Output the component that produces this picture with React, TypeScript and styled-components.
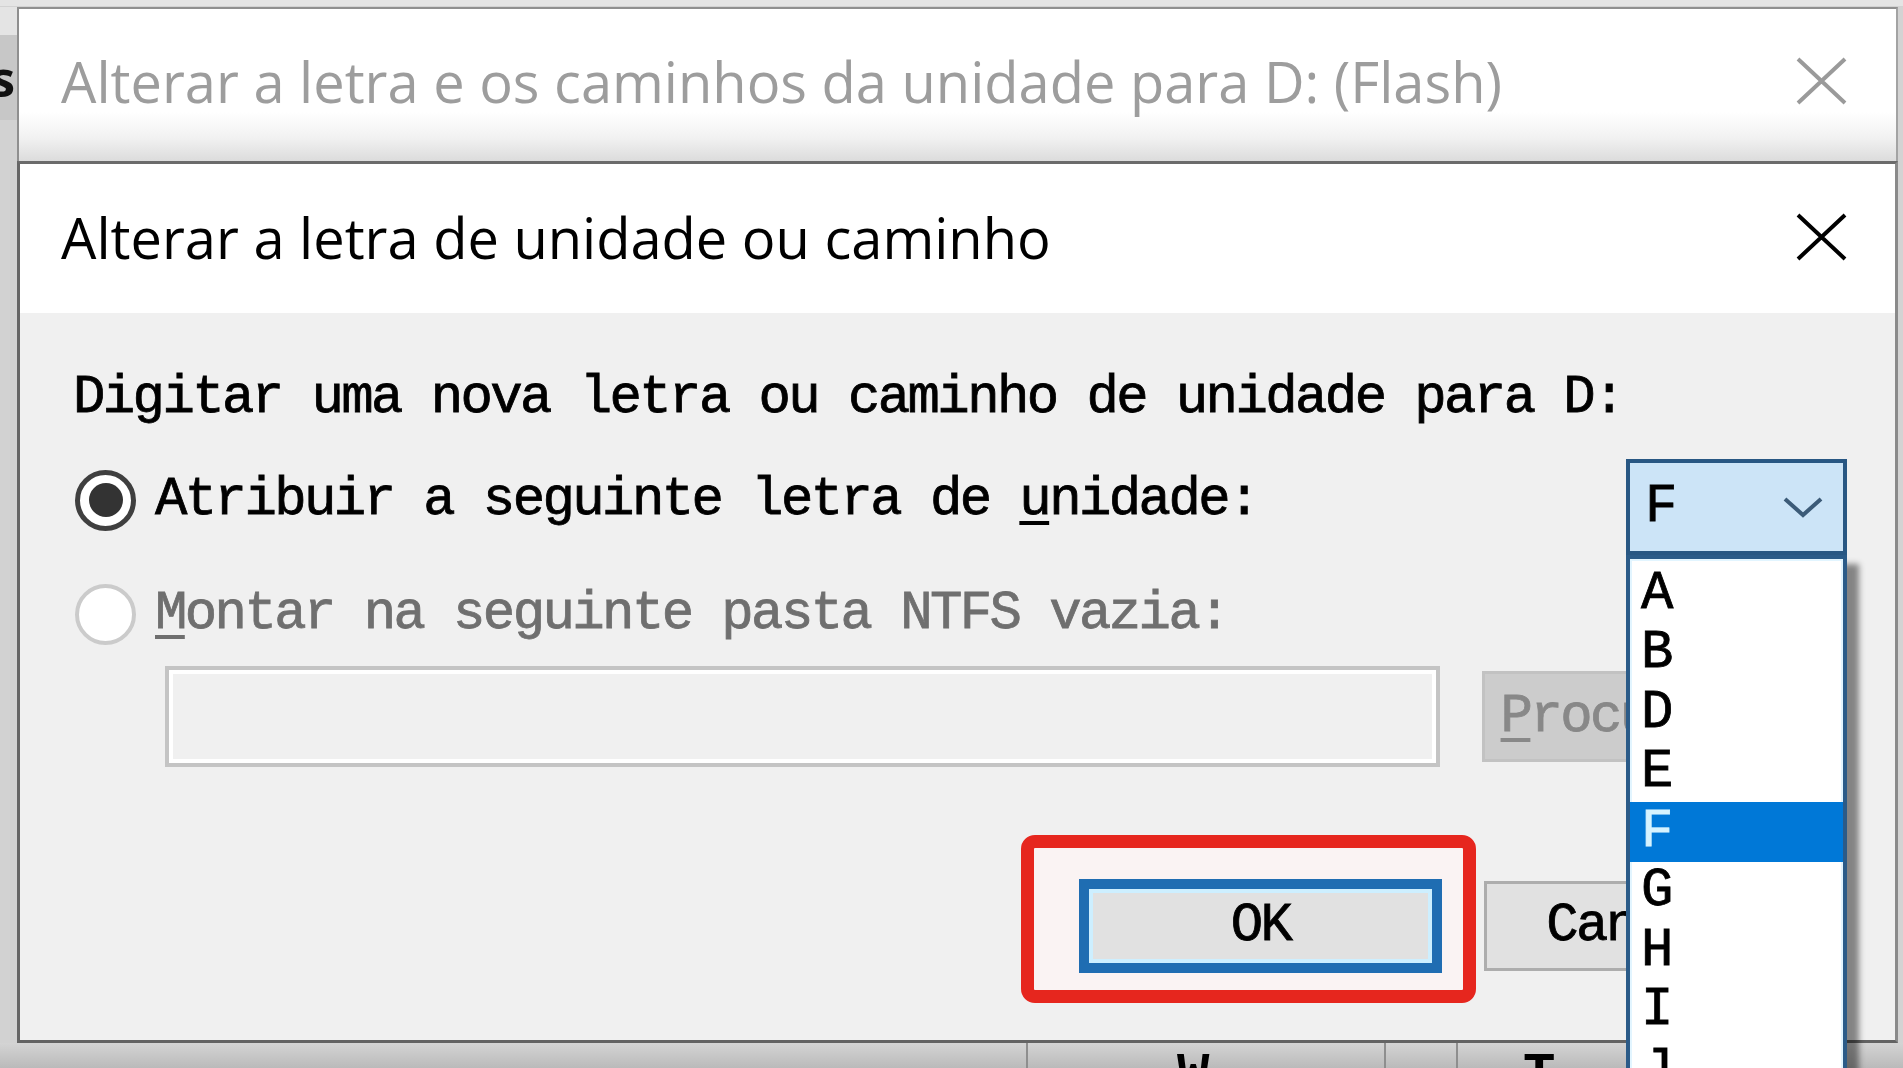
import React from "react";
import styled, { createGlobalStyle } from "styled-components";

const Global = createGlobalStyle`
  html, body { margin: 0; padding: 0; width: 1903px; height: 1068px; overflow: hidden; background: #dcdcdc; }
  #root { width: 1903px; height: 1068px; }
  * { box-sizing: border-box; }
`;

const Page = styled.div`
  width: 1903px;
  height: 1068px;
  overflow: hidden;
  display: grid;
  grid-template-rows: 7px 1036px 25px;
  background: #d9d9d9;
  font-family: "Liberation Mono", "DejaVu Sans Mono", monospace;
`;

const TopStrip = styled.div`
  background: #e4e4e4;
  border-bottom: 1px solid #d2d2d2;
`;

const MainRow = styled.div`
  display: flex;
  min-height: 0;
`;

const SideStrip = styled.div<{ $w: number }>`
  width: ${(p) => p.$w}px;
  flex: none;
  display: flex;
  flex-direction: column;
  background: #d3d3d3;
  overflow: hidden;
`;

const SideBlock = styled.div<{ $h: number; $bg: string }>`
  height: ${(p) => p.$h}px;
  background: ${(p) => p.$bg};
  display: flex;
  align-items: center;
  justify-content: flex-end;
  overflow: hidden;
`;

const SideGlyph = styled.span`
  font-family: "Open Sans", sans-serif;
  font-weight: 700;
  font-size: 50px;
  line-height: 1;
  color: #111;
  margin-right: 2px;
`;

const WindowStack = styled.div`
  flex: 1;
  display: flex;
  flex-direction: column;
  min-width: 0;
`;

const OuterTitleBar = styled.div`
  height: 154px;
  flex: none;
  border-top: 2px solid #8f8f8f;
  border-left: 2px solid #8f8f8f;
  border-right: 2px solid #a3a3a3;
  background: linear-gradient(to bottom, #ffffff 0%, #ffffff 68%, #f1f1f1 85%, #dcdcdc 100%);
  display: flex;
  align-items: center;
  justify-content: space-between;
  padding: 0 49px 8px 42px;
`;

const Dialog = styled.div`
  flex: 1;
  display: flex;
  flex-direction: column;
  border-top: 3px solid #6b6b6b;
  border-left: 3px solid #666666;
  border-bottom: 3px solid #636363;
  border-right: 3px solid #8a8a8a;
  min-height: 0;
`;

const DialogTitleBar = styled.div`
  height: 149px;
  flex: none;
  background: #ffffff;
  display: flex;
  align-items: center;
  justify-content: space-between;
  padding: 0 48px 4px 41px;
`;

const TitleText = styled.span<{ $color: string }>`
  font-family: "Open Sans", "Noto Sans", sans-serif;
  font-size: 56px;
  line-height: 1;
  color: ${(p) => p.$color};
  white-space: nowrap;
`;

const Mono = styled.span<{ $color?: string }>`
  font-family: "Liberation Mono", "DejaVu Sans Mono", monospace;
  font-weight: 400;
  font-size: 54px;
  letter-spacing: -2.6px;
  line-height: 60px;
  color: ${(p) => p.$color ?? "#000"};
  white-space: pre;
  -webkit-text-stroke: 0.8px ${(p) => p.$color ?? "#000"};
`;

const Accel = styled.span`
  text-decoration: underline;
  text-decoration-thickness: 4px;
  text-underline-offset: 7px;
`;

const Body = styled.div`
  flex: 1;
  background: #f0f0f0;
  padding: 55px 48px 0 53px;
  display: flex;
  flex-direction: column;
`;

const IntroLine = styled.div`
  height: 60px;
  display: flex;
  align-items: center;
`;

const OptionRow = styled.div<{ $mt: number }>`
  margin-top: ${(p) => p.$mt}px;
  display: flex;
  align-items: flex-start;
`;

const RadioLabel = styled.label<{ $mt?: number }>`
  display: flex;
  align-items: center;
  gap: 19px;
  height: 60px;
  margin-top: ${(p) => p.$mt ?? 0}px;
  margin-left: 2px;
`;

const RadioDot = styled.span<{ $checked?: boolean; $disabled?: boolean }>`
  width: 61px;
  height: 61px;
  flex: none;
  border-radius: 50%;
  background: #ffffff;
  border: ${(p) => (p.$disabled ? "4px solid #cbcbcb" : "5px solid #3f3f3f")};
  display: grid;
  place-items: center;
  &::after {
    content: "";
    width: 34px;
    height: 34px;
    border-radius: 50%;
    background: ${(p) => (p.$checked ? "#333333" : "transparent")};
  }
`;

const ComboWrap = styled.div`
  margin-left: auto;
  position: relative;
  width: 221px;
  height: 96px;
`;

const ComboBox = styled.div`
  width: 100%;
  height: 100%;
  border: 4px solid #285783;
  background: #cce4f7;
  display: flex;
  align-items: center;
  justify-content: space-between;
  padding: 0 20px 0 15px;
`;

const DropList = styled.ul`
  position: absolute;
  top: 100%;
  left: 0;
  width: 100%;
  margin: 0;
  padding: 5px 0 0 0;
  list-style: none;
  background: #ffffff;
  border: 4px solid #2b5b88;
  box-shadow: inset 0 0 0 2px #e2f5ff, 12px 9px 6px rgba(0, 0, 0, 0.45);
  z-index: 5;
`;

const DropItem = styled.li<{ $selected?: boolean }>`
  height: 59.5px;
  display: flex;
  align-items: center;
  padding-left: 11px;
  background: ${(p) => (p.$selected ? "#0078d7" : "transparent")};
`;

const FieldRow = styled.div`
  margin-top: 22px;
  height: 101px;
  display: flex;
  align-items: center;
  gap: 42px;
  padding-left: 92px;
`;

const PathField = styled.div`
  flex: 1;
  height: 101px;
  border: 4px solid #c4c4c4;
  box-shadow: inset 0 0 0 4px #ffffff;
  background: #f0f0f0;
`;

const PushButton = styled.div<{ $variant: "default" | "normal" | "disabled"; $h: number }>`
  width: ${(p) => (p.$variant === "disabled" ? 365 : 363)}px;
  height: ${(p) => p.$h}px;
  flex: none;
  display: flex;
  align-items: center;
  justify-content: center;
  background: ${(p) => (p.$variant === "disabled" ? "#cccccc" : "#e1e1e1")};
  border: ${(p) =>
    p.$variant === "default"
      ? "10px solid #1f6db2"
      : p.$variant === "disabled"
      ? "3px solid #c2c2c2"
      : "3px solid #adadad"};
  box-shadow: ${(p) => (p.$variant === "default" ? "inset 0 0 0 4px #cdefff" : "none")};
`;

const ButtonRow = styled.div`
  margin-top: 112px;
  display: flex;
  justify-content: flex-end;
  align-items: center;
  gap: 42px;
`;

const Highlighted = styled.div`
  position: relative;
  z-index: 0;
  &::before {
    content: "";
    position: absolute;
    left: -58px;
    right: -34px;
    top: -44px;
    bottom: -30px;
    border: 13px solid #e6261e;
    border-radius: 14px;
    background: #faf3f3;
    z-index: -1;
  }
`;

const BottomStrip = styled.div`
  display: flex;
  background: linear-gradient(to bottom, #d4d4d4, #bababa);
  overflow: hidden;
`;

const HeaderCell = styled.div<{ $w?: number; $pl: number }>`
  width: ${(p) => (p.$w ? `${p.$w}px` : "auto")};
  flex: ${(p) => (p.$w ? "none" : "1")};
  border-left: 2px solid #8e8e8e;
  padding: 6px 0 0 ${(p) => p.$pl}px;
  &:first-child {
    border-left: none;
  }
`;

const HeaderText = styled.span`
  font-family: "Liberation Mono", monospace;
  font-weight: 700;
  font-size: 54px;
  line-height: 54px;
  color: #000;
  white-space: pre;
`;

const CloseIcon = ({ color }: { color: string }) => (
  <svg width="51" height="48" viewBox="0 0 51 48" aria-hidden="true">
    <path d="M2 2 L49 46 M49 2 L2 46" stroke={color} strokeWidth="4" fill="none" />
  </svg>
);

const Chevron = () => (
  <svg width="40" height="22" viewBox="0 0 40 22" aria-hidden="true">
    <path d="M2 3 L20 19 L38 3" stroke="#3c5b78" strokeWidth="4" fill="none" />
  </svg>
);

const letters = ["A", "B", "D", "E", "F", "G", "H", "I", "J", "K"];

export default function App() {
  return (
    <>
      <Global />
      <Page>
        <TopStrip />
        <MainRow>
          <SideStrip $w={17}>
            <SideBlock $h={28} $bg="#e4e4e4" />
            <SideBlock $h={85} $bg="#c7c7c7">
              <SideGlyph>s</SideGlyph>
            </SideBlock>
            <SideBlock $h={923} $bg="#d2d2d2" />
          </SideStrip>
          <WindowStack>
            <OuterTitleBar>
              <TitleText $color="#9d9d9d">Alterar a letra e os caminhos da unidade para D: (Flash)</TitleText>
              <CloseIcon color="#9a9a9a" />
            </OuterTitleBar>
            <Dialog>
              <DialogTitleBar>
                <TitleText $color="#000000">Alterar a letra de unidade ou caminho</TitleText>
                <CloseIcon color="#000000" />
              </DialogTitleBar>
              <Body>
                <IntroLine>
                  <Mono>Digitar uma nova letra ou caminho de unidade para D:</Mono>
                </IntroLine>
                <OptionRow $mt={31}>
                  <RadioLabel $mt={11}>
                    <RadioDot $checked />
                    <Mono>
                      Atribuir a seguinte letra de <Accel>u</Accel>nidade:
                    </Mono>
                  </RadioLabel>
                  <ComboWrap>
                    <ComboBox>
                      <Mono>F</Mono>
                      <Chevron />
                    </ComboBox>
                    <DropList>
                      {letters.map((l) => (
                        <DropItem key={l} $selected={l === "F"}>
                          <Mono $color={l === "F" ? "#d6f3ff" : "#000"}>{l}</Mono>
                        </DropItem>
                      ))}
                    </DropList>
                  </ComboWrap>
                </OptionRow>
                <OptionRow $mt={29}>
                  <RadioLabel>
                    <RadioDot $disabled />
                    <Mono $color="#6f6f6f">
                      <Accel>M</Accel>ontar na seguinte pasta NTFS vazia:
                    </Mono>
                  </RadioLabel>
                </OptionRow>
                <FieldRow>
                  <PathField />
                  <PushButton $variant="disabled" $h={91}>
                    <Mono $color="#888888">
                      <Accel>P</Accel>rocurar...
                    </Mono>
                  </PushButton>
                </FieldRow>
                <ButtonRow>
                  <Highlighted>
                    <PushButton $variant="default" $h={94}>
                      <Mono>OK</Mono>
                    </PushButton>
                  </Highlighted>
                  <PushButton $variant="normal" $h={90}>
                    <Mono>Cancelar</Mono>
                  </PushButton>
                </ButtonRow>
              </Body>
            </Dialog>
          </WindowStack>
          <SideStrip $w={5} />
        </MainRow>
        <BottomStrip>
          <HeaderCell $w={1026} $pl={0} />
          <HeaderCell $w={358} $pl={149}>
            <HeaderText>W</HeaderText>
          </HeaderCell>
          <HeaderCell $w={72} $pl={0} />
          <HeaderCell $pl={65}>
            <HeaderText>T</HeaderText>
          </HeaderCell>
        </BottomStrip>
      </Page>
    </>
  );
}
